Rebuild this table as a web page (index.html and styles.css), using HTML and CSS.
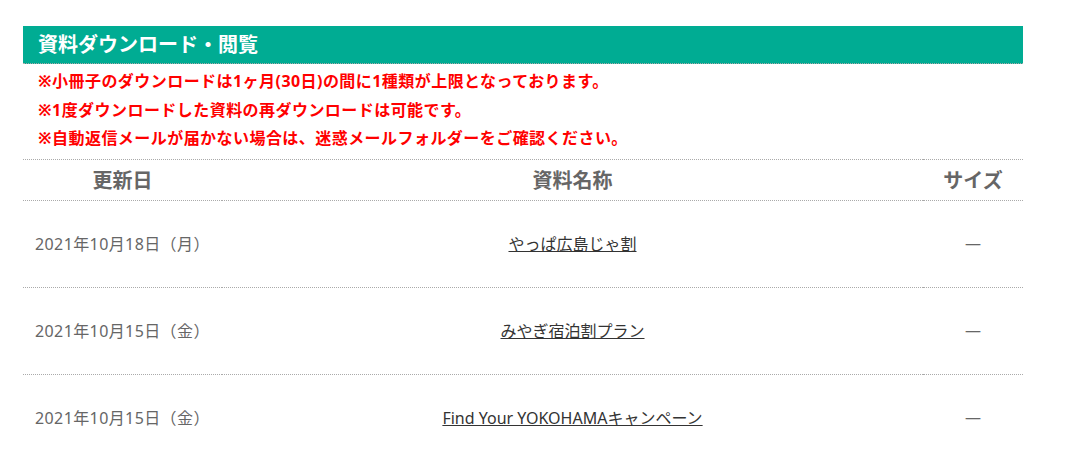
FILE: index.html
```html
<!DOCTYPE html>
<html lang="ja">
<head>
<meta charset="utf-8">
<title>資料ダウンロード・閲覧</title>
<link rel="stylesheet" href="styles.css">
</head>
<body>
<section class="panel">
  <h2 class="panel-title">資料ダウンロード・閲覧</h2>
  <div class="notes">
    <p>※小冊子のダウンロードは1ヶ月(30日)の間に1種類が上限となっております。</p>
    <p>※1度ダウンロードした資料の再ダウンロードは可能です。</p>
    <p>※自動返信メールが届かない場合は、迷惑メールフォルダーをご確認ください。</p>
  </div>
  <table class="docs">
    <thead>
      <tr>
        <th class="col-date">更新日</th>
        <th class="col-name">資料名称</th>
        <th class="col-size">サイズ</th>
      </tr>
    </thead>
    <tbody>
      <tr>
        <td class="date">2021年10月18日（月）</td>
        <td class="name"><a href="#">やっぱ広島じゃ割</a></td>
        <td class="size">—</td>
      </tr>
      <tr>
        <td class="date">2021年10月15日（金）</td>
        <td class="name"><a href="#">みやぎ宿泊割プラン</a></td>
        <td class="size">—</td>
      </tr>
      <tr>
        <td class="date">2021年10月15日（金）</td>
        <td class="name"><a href="#">Find Your YOKOHAMAキャンペーン</a></td>
        <td class="size">—</td>
      </tr>
    </tbody>
  </table>
</section>
</body>
</html>
```

FILE: styles.css
```css
html, body {
  margin: 0;
  padding: 0;
  background: #ffffff;
}
body {
  font-family: "Noto Sans", "Noto Sans CJK JP", sans-serif;
  color: #555555;
}
.panel {
  width: 1000px;
  margin: 26px 0 0 23px;
}
.panel-title {
  margin: 0;
  height: 37px;
  line-height: 37px;
  padding-left: 15px;
  background: #00ac93;
  color: #ffffff;
  font-size: 20px;
  font-weight: bold;
  border-bottom: 1px dotted #aaaaaa;
}
.notes {
  padding: 3px 0 6px 15px;
}
.notes p {
  margin: 0;
  color: #ff0000;
  font-size: 16px;
  font-weight: bold;
  line-height: 28.5px;
  letter-spacing: 0.45px;
}
.docs {
  width: 1000px;
  border-collapse: collapse;
  table-layout: fixed;
}
.docs th,
.docs td {
  border-top: 1px dotted #aaaaaa;
  border-bottom: 1px dotted #aaaaaa;
  padding: 0;
}
.docs th {
  height: 40px;
  font-size: 20px;
  font-weight: bold;
  color: #666666;
  text-align: center;
}
.col-date { width: 199px; }
.col-size { width: 100px; }
.docs td {
  height: 84px;
  padding-bottom: 2px;
  font-size: 16px;
  vertical-align: middle;
}
.docs td.date {
  padding-left: 12px;
  color: #666666;
  letter-spacing: 0.4px;
}
.docs td.name {
  text-align: center;
}
.docs td.name a {
  color: #333333;
  text-decoration: underline;
}
.docs td.size {
  text-align: center;
  color: #666666;
}
```
